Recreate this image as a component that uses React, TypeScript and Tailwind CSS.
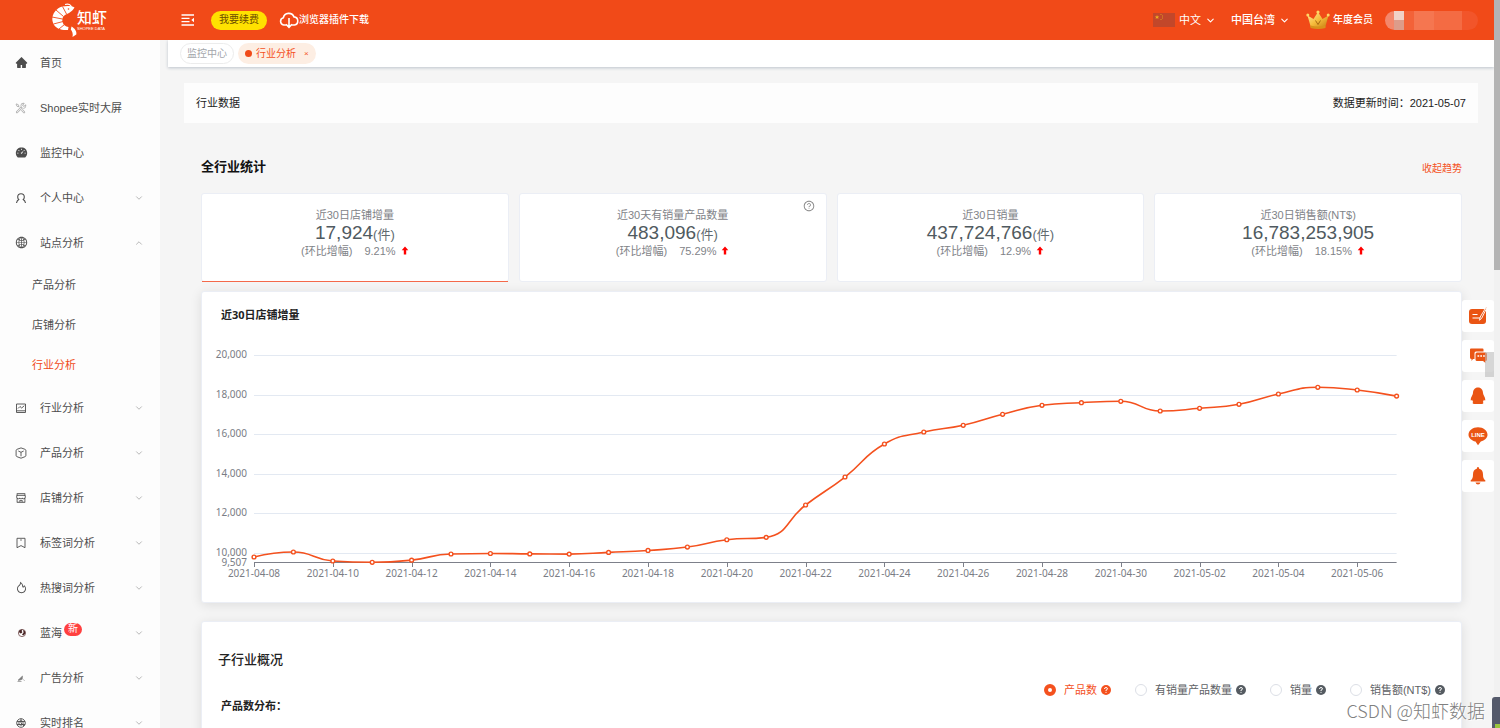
import React, { useState } from "react";
import {
  AiFillHome,
  AiFillDashboard,
  AiOutlineGlobal,
  AiOutlineShop,
  AiOutlineFire,
  AiOutlineQuestionCircle,
} from "react-icons/ai";
import { VscTools } from "react-icons/vsc";
import { ChevronDown, ChevronUp } from "lucide-react";

const line = { fill: "none", stroke: "currentColor", strokeWidth: 0.9 } as const;

function UserIcon() {
  return (
    <svg viewBox="0 0 12 12" className="size-3" {...line} strokeWidth={1.1}>
      <path d="M1.500 11c.3-1.700 1-2.700 2.300-3.400A3.600 3.600 0 0 1 2.700 5a3.300 3.300 0 0 1 6.600 0 3.600 3.600 0 0 1-1.100 2.600c1.300.7 2 1.700 2.300 3.400" />
    </svg>
  );
}
function TrendIcon() {
  return (
    <svg viewBox="0 0 12 12" className="size-3" {...line}>
      <path d="M1.500 2h9v8.500h-9zM1.500 8.800h9M3 6.500l2-2 1.700 1.500L9.300 3.700" />
    </svg>
  );
}
function BoxIcon() {
  return (
    <svg viewBox="0 0 12 12" className="size-3" {...line}>
      <path d="M6 .9 10 2.300q.9.500.9 1.200v5q0 .8-.9 1.200L6 11.200 2 9.700q-.9-.400-.9-1.200v-5Q1.100 2.800 2 2.300zM3.300 4 6 5.300 8.700 4M6 5.300v4" />
    </svg>
  );
}
function BookmarkIcon() {
  return (
    <svg viewBox="0 0 12 12" className="size-3" {...line}>
      <path d="M2 1.300h8v9.400L6 8.600l-4 2.100zM5.200 3h1.600" />
    </svg>
  );
}
function OceanIcon() {
  return (
    <svg viewBox="0 0 12 12" className="ml-px size-3">
      <circle cx="6" cy="6" r="3.600" fill="#fff" stroke="#7d5a5a" strokeWidth="0.9" />
      <path d="M2.800 4Q4 2.300 6.500 2.400L5.600 4l.8 1.200L5 6.500 3.600 6zM7.200 2.700l2 1.900-.2 2.400-1.800 1.500L6 7.500l1.500-1.700z" fill="#4a2626" />
    </svg>
  );
}
function AdIcon() {
  return (
    <svg viewBox="0 0 12 12" className="size-3">
      <path d="M3 8.300 7.500 4 7.200 7.300 4.500 8.300zM8.500 7.500l1 1.300M2.500 9.500h4" fill="#777" stroke="#888" strokeWidth="0.7" />
    </svg>
  );
}
function RankIcon() {
  return (
    <svg viewBox="0 0 12 12" className="size-3" {...line}>
      <circle cx="6" cy="6" r="4.300" />
      <circle cx="6" cy="6" r="2.200" />
      <path d="M2 4.500h8M2 7.500h8M6 1.700V6l3 3" />
    </svg>
  );
}

type Item = { label: string; icon: React.ReactNode; children?: string[]; open?: boolean; leaf?: boolean; badge?: string };

const menu: Item[] = [
  { label: "首页", icon: <AiFillHome className="size-[13px]" />, leaf: true },
  { label: "Shopee实时大屏", icon: <VscTools className="size-3 text-[#aaa]" />, leaf: true },
  { label: "监控中心", icon: <AiFillDashboard className="size-[13px]" />, leaf: true },
  { label: "个人中心", icon: <UserIcon /> },
  { label: "站点分析", icon: <AiOutlineGlobal className="size-[13px]" />, open: true, children: ["产品分析", "店铺分析", "行业分析"] },
  { label: "行业分析", icon: <TrendIcon /> },
  { label: "产品分析", icon: <BoxIcon /> },
  { label: "店铺分析", icon: <AiOutlineShop className="size-3" /> },
  { label: "标签词分析", icon: <BookmarkIcon /> },
  { label: "热搜词分析", icon: <AiOutlineFire className="size-[13px]" /> },
  { label: "蓝海", icon: <OceanIcon />, badge: "新" },
  { label: "广告分析", icon: <AdIcon /> },
  { label: "实时排名", icon: <RankIcon /> },
];

function Sidebar() {
  return (
    <nav className="w-40 shrink-0 overflow-hidden bg-[#fdfdfd] text-[#4d4d4d]">
      {menu.map((m) => (
        <div key={m.label + (m.open ? "-open" : "")}>
          <a href="#" className="flex h-[45px] items-center pr-4 pl-[15px]">
            <span className="flex w-[25px] shrink-0 items-center">{m.icon}</span>
            <span className="relative">
              {m.label}
              {m.badge && (
                <span className="absolute -top-0.5 left-full ml-0.5 flex h-[13px] w-[18px] items-center justify-center rounded-full bg-[#ff4040] text-[10px] text-white">
                  {m.badge}
                </span>
              )}
            </span>
            {!m.leaf &&
              (m.open ? (
                <ChevronUp className="ml-auto size-[10px] text-[#aaa]" strokeWidth={2} />
              ) : (
                <ChevronDown className="ml-auto size-[10px] text-[#aaa]" strokeWidth={2} />
              ))}
          </a>
          {m.children?.map((c) => (
            <a
              key={c}
              href="#"
              className={c === "行业分析" ? "flex h-10 items-center pl-8 text-[#f04a18]" : "flex h-10 items-center pl-8"}
            >
              {c}
            </a>
          ))}
        </div>
      ))}
    </nav>
  );
}

function Logo() {
  return (
    <a href="#" className="flex w-40 shrink-0 items-center pl-[51px] text-white" aria-label="知虾">
      <svg viewBox="0 0 26 34" className="h-[34px] w-[26px] shrink-0">
        <path d="M14 1.500c3.500-1 6 0 6.500 3" fill="none" stroke="#fff" strokeWidth="1.100" />
        <path
          d="M23.500 4.500C20 2.500 11.500 2.500 7 5.500 1.500 9.500-.3 16 2.800 21.500c2.800 4.500 8 6 14.200 5.500l.5-3c-3-.5-5-2-5.800-4.500-.9-3-.3-5.700 2.300-7.500 2-1 6.500-2.500 9.500-7.500z"
          fill="#fff"
        />
        <path
          d="M11.500 3.500 15.500 11M5 7l7.500 6.500M1 14l10.500 2M2.500 21l9.500-2.500M8 26l5.500-4.500"
          fill="none"
          stroke="#f14a18"
          strokeWidth="0.9"
        />
        <circle cx="17.500" cy="6" r="0.800" fill="#f14a18" />
        <path d="M20.500 23.500c3.500 2 5.500 5 4.800 8L21.500 34c.8-3.500-.3-5.500-1.700-7.500z" fill="#fff" />
      </svg>
      <span className="flex flex-col">
        <span className="text-[15px] leading-4 font-medium">知虾</span>
        <span className="text-[4px] leading-[5px]">SHOPEE DATA</span>
      </span>
    </a>
  );
}

function Header() {
  return (
    <header className="flex h-10 shrink-0 items-center bg-[#f14a18] pr-4 text-white">
      <Logo />
      <button type="button" aria-label="收起菜单" className="ml-[21px]">
        <svg viewBox="0 0 14 12" className="h-3 w-[14px]" fill="none" stroke="#fff" strokeWidth="1.300">
          <path d="M.5 1h12.500M.5 4.400h8M.5 7.700h8M.5 11h12.500" />
          <path d="M13 3.700v4.600L10.300 6z" fill="#fff" stroke="none" />
        </svg>
      </button>
      <button type="button" className="ml-4 flex h-[19px] items-center rounded-full bg-[#ffe100] px-2 text-[10px] text-[#6a4a00]">
        我要续费
      </button>
      <a href="#" className="ml-3 flex items-center text-[10px] font-medium">
        <svg viewBox="0 0 20 17" className="h-[17px] w-5" fill="none" stroke="#fff" strokeWidth="1.600">
          <path d="M7 13H4.600A3.700 3.700 0 0 1 4.300 5.800 5.600 5.600 0 0 1 15 4.900 4.100 4.100 0 0 1 15.500 13H13M10 6v9M7 12.300l3 3 3-3" />
        </svg>
        浏览器插件下载
      </a>
      <div className="ml-auto flex items-center">
        <button type="button" className="flex items-center gap-1">
          <svg viewBox="0 0 22 14" className="h-[14px] w-[22px]">
            <rect width="22" height="14" fill="#c2472a" />
            <path d="m4 2 .6 1.400h1.600L5 4.400l.5 1.600L4 5.100 2.600 6l.5-1.600-1.200-1h1.600z" fill="#f0b020" />
            <path d="M7.500 1.500h1M9 3h1M9 5h1M7.500 6.500h1" stroke="#e0a020" strokeWidth="0.900" />
          </svg>
          中文
          <ChevronDown className="size-[11px]" strokeWidth={2.4} />
        </button>
        <button type="button" className="ml-[15px] flex items-center gap-1 font-medium">
          中国台湾
          <ChevronDown className="size-[11px]" strokeWidth={2.4} />
        </button>
        <span className="ml-4 flex items-center gap-[3px] text-[10px] font-medium">
          <svg viewBox="0 0 24 20" className="h-5 w-6">
            <defs>
              <linearGradient id="gold" x1="0" y1="0" x2="1" y2="1">
                <stop offset="0" stopColor="#ffe89a" />
                <stop offset="0.5" stopColor="#f6bd3c" />
                <stop offset="1" stopColor="#c47a10" />
              </linearGradient>
            </defs>
            <path d="M1.500 5.500 7.500 9 12 2l4.500 7 6-3.500-3.200 11.300Q12 18.800 4.700 16.800z" fill="url(#gold)" />
            <path d="M4.500 15.500Q12 17.500 19.500 15.500V18Q12 20 4.500 18z" fill="#d8921c" />
            <path d="m9.500 10.500 2.500 4 2.500-4" fill="none" stroke="#a86a10" strokeWidth="1" />
            <circle cx="12" cy="2" r="1.600" fill="#ffd765" />
            <circle cx="1.800" cy="5" r="1.500" fill="#ffd765" />
            <circle cx="22.200" cy="5" r="1.500" fill="#ffd765" />
          </svg>
          年度会员
        </span>
        <span className="ml-3 flex h-[19px] w-[93px] overflow-hidden rounded-full">
          <span className="w-[9px] bg-[#f4876b]" />
          <span className="flex w-[10px] flex-col">
            <span className="h-[9px] bg-[#f0d2c8]" />
            <span className="flex-1 bg-[#dd9c8a]" />
          </span>
          <span className="w-[10px] bg-[#f36238]" />
          <span className="w-5 bg-[#f57650]" />
          <span className="w-[28px] bg-[#f46b43]" />
          <span className="flex-1 bg-[#f2552a]" />
        </span>
      </div>
    </header>
  );
}

const stats = [
  { title: "近30日店铺增量", value: "17,924", unit: "(件)", rate: "9.21%", active: true },
  { title: "近30天有销量产品数量", value: "483,096", unit: "(件)", rate: "75.29%", help: true },
  { title: "近30日销量", value: "437,724,766", unit: "(件)", rate: "12.9%" },
  { title: "近30日销售额(NT$)", value: "16,783,253,905", unit: "", rate: "18.15%" },
];

function StatCards() {
  return (
    <div className="grid grid-cols-4 gap-[10px]">
      {stats.map((s) => (
        <section
          key={s.title}
          className="relative h-[89px] rounded-[3px] border border-[#ebeef5] bg-white pt-[14px] text-center text-[#7f8388]"
        >
          {s.active && <span className="absolute inset-x-0 -bottom-px h-px bg-[#f4694a]" />}
          {s.help && <AiOutlineQuestionCircle className="absolute top-[6px] right-[11px] size-3 text-[#888]" />}
          <h3 className="leading-[15px]">{s.title}</h3>
          <p className="flex h-5 items-baseline justify-center text-[19px] leading-5 text-[#505a60]">
            {s.value}
            <span className="text-[13px] text-[#606a70]">{s.unit}</span>
          </p>
          <p className="flex h-[15px] items-center justify-center">
            <span>(环比增幅)</span>
            <span className="ml-3">{s.rate}</span>
            <svg viewBox="0 0 8 9" className="ml-[5px] h-[9px] w-2" aria-label="上升">
              <path d="M4 .5 7.300 4.300H5.200V8.500H2.800V4.300H.7z" fill="#f00" />
            </svg>
          </p>
        </section>
      ))}
    </div>
  );
}

const series = [
  9798, 10050, 9596, 9530, 9640, 9950, 9975, 9955, 9945, 10030, 10130, 10300, 10670, 10790, 12424, 13838, 15505, 16111,
  16449, 17005, 17460, 17591, 17662, 17172, 17308, 17510, 18030, 18369, 18232, 17924,
];
const dates = series.map((_, i) => {
  const day = 8 + i;
  return day <= 30 ? `2021-04-${String(day).padStart(2, "0")}` : `2021-05-${String(day - 30).padStart(2, "0")}`;
});
const px = (i: number) => 52 + i * 39.4;
const py = (v: number) => 32 + (20000 - v) * 0.0198;
const clamp = (v: number, a: number, b: number) => Math.max(Math.min(v, Math.max(a, b)), Math.min(a, b));

// Cubic smoothing whose control points never leave the box between neighbouring points.
function smoothPath(pts: [number, number][]) {
  let d = `M${pts[0][0]} ${pts[0][1]}`;
  let c0 = pts[0];
  for (let i = 1; i < pts.length; i++) {
    const [x, y] = pts[i];
    const [ax, ay] = pts[i - 1];
    const next = pts[i + 1];
    let c1: [number, number] = [x, y];
    let n0: [number, number] = [x, y];
    if (next) {
      const [bx, by] = next;
      const lp = Math.hypot(x - ax, y - ay);
      const ln = Math.hypot(bx - x, by - y);
      const r = ln / (ln + lp);
      n0 = [clamp(x + (bx - ax) * 0.5 * r, x, bx), clamp(y + (by - ay) * 0.5 * r, y, by)];
      c1 = [clamp(x - ((n0[0] - x) * lp) / ln, ax, x), clamp(y - ((n0[1] - y) * lp) / ln, ay, y)];
      n0 = [x + ((x - c1[0]) * ln) / lp, y + ((y - c1[1]) * ln) / lp];
    }
    d += `C${c0[0]} ${c0[1]} ${c1[0]} ${c1[1]} ${x} ${y}`;
    c0 = n0;
  }
  return d;
}

function TrendChart() {
  const pts = series.map((v, i) => [px(i), py(v)] as [number, number]);
  const bottom = py(9507);
  const right = px(series.length - 1);
  return (
    <svg viewBox="0 0 1259 279" className="block h-auto w-full font-['Noto_Sans','Open_Sans',sans-serif] text-[10px]">
      {[20000, 18000, 16000, 14000, 12000, 10000].map((v) => (
        <g key={v}>
          <path d={`M52 ${Math.round(py(v)) + 0.5}H${right}`} stroke="#e3e9f2" />
          <text x="45" y={Math.round(py(v)) + 3} textAnchor="end" fill="#7a7d85">
            {v.toLocaleString("en-US")}
          </text>
        </g>
      ))}
      <text x="45" y={Math.round(bottom) + 3} textAnchor="end" fill="#7a7d85">
        9,507
      </text>
      <path d={`M52 239.500H${right}`} stroke="#7d808a" />
      {dates.map((d, i) =>
        i % 2 ? null : (
          <g key={d}>
            <path d={`M${Math.round(px(i)) + 0.5} 239v5`} stroke="#7d808a" />
            <text x={px(i)} y="254" textAnchor="middle" fill="#7a7d85">
              {d}
            </text>
          </g>
        ),
      )}
      <path d={smoothPath(pts)} fill="none" stroke="#f4511e" strokeWidth="1.600" />
      {pts.map(([x, y]) => (
        <circle key={x} cx={x} cy={y} r="1.900" fill="#fff" stroke="#f4511e" strokeWidth="1.400" />
      ))}
    </svg>
  );
}

const metrics = ["产品数", "有销量产品数量", "销量", "销售额(NT$)"];

function MetricPicker() {
  const [picked, setPicked] = useState(metrics[0]);
  return (
    <div className="flex justify-end gap-6 pr-4">
      {metrics.map((m) => {
        const on = m === picked;
        return (
          <label key={m} className={on ? "flex items-center text-[#f4511e]" : "flex items-center text-[#606266]"}>
            <input
              type="radio"
              name="metric"
              checked={on}
              onChange={() => setPicked(m)}
              className="mr-2 size-3 appearance-none rounded-full border border-[#dcdfe6] bg-white checked:border-4 checked:border-[#f4511e]"
            />
            {m}
            <svg viewBox="0 0 10 10" className="ml-1 size-[10px]">
              <circle cx="5" cy="5" r="5" fill={on ? "#f4511e" : "#555b61"} />
              <path d="M3.500 4Q3.500 2.500 5 2.500T6.500 3.900Q6.400 4.700 5 5.200V6M5 6.900v1" fill="none" stroke="#fff" strokeWidth="1" />
            </svg>
          </label>
        );
      })}
    </div>
  );
}

const tools = [
  {
    label: "反馈",
    icon: (
      <>
        <rect x="1" y="3" width="17" height="15" rx="3" fill="#ea5514" />
        <path d="M4.500 8.500h5M4.500 12h8" stroke="#fff" strokeWidth="1.200" />
        <path d="m18.200 1-6 10-.7 3.300 2.300-2.300L19 1.500z" fill="#ea5514" stroke="#fff" strokeWidth="0.900" />
      </>
    ),
  },
  {
    label: "咨询",
    icon: (
      <>
        <path d="M3 2.500h11.500q1 0 1 1v2H8Q6.500 5.500 6.500 7v6H5l-1.500 2V13Q2 13 2 11.500v-8q0-1 1-1z" fill="#ea5514" />
        <path d="M9 6.500h8.500Q19 6.500 19 8v5.500Q19 15 17.500 15v2L15 15H9q-1.500 0-1.500-1.500V8Q7.500 6.500 9 6.500z" fill="#ea5514" />
        <path d="M9.500 10h1.700M12.300 10H14M15.100 10h1.700" stroke="#fff" strokeWidth="1.700" />
      </>
    ),
  },
  {
    label: "QQ",
    icon: (
      <path
        d="M10 1.500c3.300 0 5 2.500 5 5.500 0 1.500 2.500 4.500 2.300 7-.1 1-.9.5-1.500-.3-.1 1-.5 1.700-1 2.300 1 .6.700 2-1 2H6.200c-1.700 0-2-1.400-1-2-.5-.6-.9-1.300-1-2.300-.6.8-1.400 1.300-1.500.3C2.500 11.500 5 8.500 5 7c0-3 1.700-5.500 5-5.500z"
        fill="#ea5514"
      />
    ),
  },
  {
    label: "LINE",
    icon: (
      <>
        <path d="M10 1.200c5.300 0 9.500 3.200 9.500 7.500 0 3.200-3 5.600-6.700 6.800L10 19.300 7.500 15.600C3.500 14.500.5 12 .5 8.700.5 4.400 4.700 1.200 10 1.200z" fill="#ea5514" />
        <text x="10" y="11.200" textAnchor="middle" fontSize="6" fontWeight="700" fill="#fff">
          LINE
        </text>
      </>
    ),
  },
  {
    label: "通知",
    icon: (
      <path
        d="M10 1q1.200 0 1.200 1.700C14 3.500 15 5.500 15 8.500c0 3.500.8 4.800 2.300 5.800V15.500H2.700V14.300C4.200 13.300 5 12 5 8.500 5 5.500 6 3.500 8.800 2.700 8.800 1 10 1 10 1zM7.500 16.500h5Q12 18.500 10 18.500T7.500 16.500z"
        fill="#ea5514"
      />
    ),
  },
];

function FloatingTools() {
  return (
    <div className="absolute top-[300px] right-[6px] flex flex-col gap-2">
      {tools.map((t) => (
        <button key={t.label} type="button" aria-label={t.label} className="flex size-8 items-center justify-center rounded-[3px] bg-white">
          <svg viewBox="0 0 20 20" className="size-5">
            {t.icon}
          </svg>
        </button>
      ))}
      <span className="absolute top-[52px] right-0 h-[25px] w-[9px] bg-[#bbbbbb]/60" />
    </div>
  );
}

export default function App() {
  return (
    <div className="relative flex h-screen overflow-hidden bg-[#f5f5f5] font-['Liberation_Sans','Noto_Sans_CJK_SC',sans-serif] text-[11px] leading-4">
      <div className="flex min-w-0 flex-1 flex-col">
        <Header />
        <div className="flex min-h-0 flex-1">
          <Sidebar />
          <main className="min-w-0 flex-1 overflow-hidden">
            <div className="ml-2 flex h-[27px] items-center gap-1 bg-white pl-3 text-[10px] shadow-[0_1px_3px_rgba(60,80,110,0.3)]">
              <a href="#" className="flex h-[21px] items-center rounded-full border border-[#ececec] px-[6px] text-[#a3a6ab]">
                监控中心
              </a>
              <a href="#" className="flex h-[21px] items-center rounded-full bg-[#fdeee3] px-[7px] text-[#f4511e]">
                <span className="mr-1 size-[7px] rounded-full bg-[#f04a18]" />
                行业分析
                <span className="ml-2 text-[8px]">×</span>
              </a>
            </div>
            <div className="mx-6 mt-4 mr-4 flex h-10 items-center justify-between bg-[#fdfdfd] px-3 text-[#222]">
              <span>行业数据</span>
              <span>数据更新时间：2021-05-07</span>
            </div>
            <div className="mr-8 ml-[41px]">
              <div className="flex h-[70px] items-center justify-between pt-[18px]">
                <h2 className="text-[13px] font-bold text-[#111]">全行业统计</h2>
                <button type="button" className="pt-1 text-[10px] text-[#f4511e]">
                  收起趋势
                </button>
              </div>
              <StatCards />
              <section className="mt-[9px] rounded-[3px] border border-[#ebeef5] bg-white pt-[15px] shadow-[0_2px_12px_rgba(0,0,0,0.1)]">
                <h3 className="pl-[19px] font-['Open_Sans','Noto_Sans_CJK_SC',sans-serif] font-bold text-[#222]">
                  近30日店铺增量
                </h3>
                <TrendChart />
              </section>
              <section className="mt-[18px] rounded-[3px] border border-[#ebeef5] bg-white pt-[30px] pb-10 shadow-[0_2px_12px_rgba(0,0,0,0.1)]">
                <h2 className="pl-4 text-[13px] font-medium text-[#222]">子行业概况</h2>
                <div className="mt-[14px]">
                  <MetricPicker />
                </div>
                <h3 className="pl-[19px] font-bold text-[#222]">产品数分布：</h3>
              </section>
            </div>
          </main>
        </div>
      </div>
      <div className="w-[6px] shrink-0 bg-[#f1f1f1]">
        <div className="h-[270px] bg-[#b4b4b4]" />
      </div>
      <FloatingTools />
      <span className="absolute right-[15px] bottom-[7px] font-['Noto_Sans_CJK_SC',sans-serif] text-[18px] leading-[22px] font-light text-[#808080] [text-shadow:1px_1px_1px_#fff]">
        CSDN @知虾数据
      </span>
      <span className="absolute right-0 bottom-0 flex h-[31px] w-2 flex-col justify-end rounded-tl-[3px] bg-[#555a6b] pl-[3px]">
        <span className="h-1 bg-[#9bc53d]" />
      </span>
    </div>
  );
}
